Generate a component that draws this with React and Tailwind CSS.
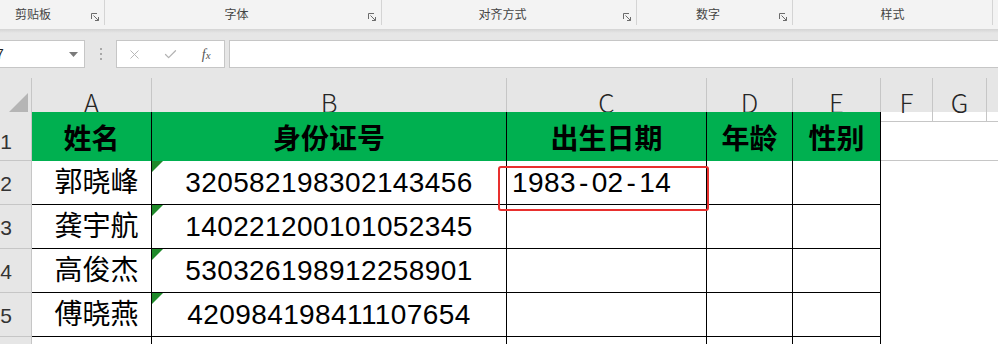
import React from 'react';
import { X, Check } from 'lucide-react';

const cols = 'grid grid-cols-[32px_120px_355px_200px_86px_88px_52px_54px_1fr]';

const groups = [
  { label: '剪贴板', w: 'w-[105px]', labelW: 'w-[66px]', launcher: true },
  { label: '字体', w: 'w-[277px]', launcher: true },
  { label: '对齐方式', w: 'w-[255px]', launcher: true },
  { label: '数字', w: 'w-[156px]', launcher: true },
  { label: '样式', w: 'w-[200px]', launcher: false },
];

const people = [
  { n: 2, name: '郭晓峰', id: '320582198302143456', date: ['1983', '02', '14'] },
  { n: 3, name: '龚宇航', id: '140221200101052345' },
  { n: 4, name: '高俊杰', id: '530326198912258901' },
  { n: 5, name: '傅晓燕', id: '420984198411107654' },
];

const Launcher = () => (
  <svg width="9" height="9" viewBox="0 0 9 9" className="mb-[3px] mr-[4px] shrink-0">
    <path d="M0.5 6V0.5H6" stroke="#6b6b6b" fill="none" />
    <path d="M2.5 2.5L7.5 7.5M4 7.5H7.5V4" stroke="#6b6b6b" fill="none" />
  </svg>
);

const RowHead = ({ n, tall }) => (
  <div className="bg-[#e6e6e6] border-r border-b border-[#c6c6c6] overflow-hidden flex items-end">
    <div
      className={`w-[46px] -ml-[17px] shrink-0 text-center leading-none font-light text-[21px] text-[#333] ${tall ? 'pb-[8px]' : 'pb-[10px]'}`}
    >
      {n}
    </div>
  </div>
);

export default function App() {
  return (
    <div className="w-[998px] h-[344px] overflow-hidden bg-white font-['Liberation_Sans','Noto_Sans_CJK_SC',sans-serif] text-black">
      {/* Ribbon group labels */}
      <div className="h-[29px] bg-[#f3f3f3] flex items-start">
        {groups.map((g) => (
          <div key={g.label} className={`${g.w} h-[25px] border-r border-[#d4d4d4] flex items-end shrink-0`}>
            <div
              className={`${g.labelW || 'flex-1'} text-center text-[12px] leading-[14px] pb-[4px] text-[#444] font-['Noto_Sans_CJK_SC',sans-serif]`}
            >
              {g.label}
            </div>
            {g.labelW && <div className="flex-1" />}
            {g.launcher && <Launcher />}
          </div>
        ))}
      </div>

      {/* Formula bar */}
      <div className="h-[49px] bg-[#e6e6e6]">
        <div className="h-[4px] bg-gradient-to-b from-[#d4d4d4] to-[#e6e6e6]" />
        <div className="flex h-[28px] mt-[7px]">
          <div className="w-[85px] bg-white border-y border-r border-[#c6c6c6] flex items-center justify-between">
            <span className="-ml-[4px] text-[14px] text-[#222] font-['Liberation_Sans',sans-serif]">7</span>
            <svg width="9" height="5" viewBox="0 0 9 5" className="mr-[6px]">
              <path d="M0 0H9L4.5 5Z" fill="#7a7a7a" />
            </svg>
          </div>
          <div className="w-[31px] flex flex-col items-center justify-center gap-[3px]">
            <div className="w-[2px] h-[2px] bg-[#a8a8a8]" />
            <div className="w-[2px] h-[2px] bg-[#a8a8a8]" />
            <div className="w-[2px] h-[2px] bg-[#a8a8a8]" />
          </div>
          <div className="w-[109px] bg-white border border-[#c6c6c6] flex items-center">
            <span className="w-[36px] flex justify-center">
              <X size={15} strokeWidth={1.5} color="#b3b3b3" />
            </span>
            <span className="w-[36px] flex justify-center">
              <Check size={15} strokeWidth={2} color="#b3b3b3" />
            </span>
            <span className="w-[36px] text-center italic text-[14px] text-[#555] font-['Liberation_Serif',serif]">
              f<span className="text-[11px]">x</span>
            </span>
          </div>
          <div className="flex-1 ml-[4px] bg-white border-y border-l border-[#c6c6c6]" />
        </div>
      </div>

      {/* Column headers */}
      <div className={`${cols} h-[34px] bg-[#e6e6e6]`}>
        <div className="border-r border-b border-[#c6c6c6] flex items-end justify-end pr-[3px] pb-[3px]">
          <svg width="25" height="25" viewBox="0 0 25 25">
            <path d="M25 0V25H0Z" fill="#b5b5b5" />
          </svg>
        </div>
        {['A', 'B', 'C', 'D', 'E', 'F', 'G'].map((l) => (
          <div
            key={l}
            className="border-r border-b border-[#c6c6c6] flex items-center justify-center pt-[4px] text-[26px] font-light text-[#262626] font-['Noto_Sans_CJK_SC',sans-serif]"
          >
            {l}
          </div>
        ))}
        <div className="border-b border-[#c6c6c6]" />
      </div>

      {/* Row 1: table header */}
      <div className={`${cols} h-[49px]`}>
        <RowHead n={1} tall />
        {['姓名', '身份证号', '出生日期', '年龄', '性别'].map((t) => (
          <div
            key={t}
            className="bg-[#00b050] border-r border-black flex items-center justify-center text-[28px] font-bold font-['Noto_Sans_CJK_SC',sans-serif]"
          >
            {t}
          </div>
        ))}
        <div className="border-b border-[#c6c6c6]" />
        <div className="border-b border-[#c6c6c6]" />
        <div className="border-b border-[#c6c6c6]" />
      </div>

      {/* Data rows */}
      {people.map((p) => (
        <div key={p.n} className={`${cols} h-[44px]`}>
          <RowHead n={p.n} />
          <div className="border-r border-b border-black flex items-center justify-center pl-[10px] text-[28px]">
            {p.name}
          </div>
          <div className="relative border-r border-b border-black flex items-center justify-center text-[28px] tracking-[0.4px]">
            <svg width="11" height="11" viewBox="0 0 11 11" className="absolute left-0 top-0">
              <path d="M0 0H11L0 11Z" fill="#1f8a2a" />
            </svg>
            {p.id}
          </div>
          <div className="relative border-r border-b border-black flex items-center pl-[5px] text-[28px] tracking-[0.4px]">
            {p.date && (
              <>
                {p.date[0]}
                <span className="px-[3px]">-</span>
                {p.date[1]}
                <span className="px-[3px]">-</span>
                {p.date[2]}
                <div className="absolute -left-[9px] top-[5px] w-[211px] h-[45px] border-2 border-[#e8302e] rounded-[3px] z-10" />
              </>
            )}
          </div>
          <div className="border-r border-b border-black" />
          <div className="border-r border-b border-black" />
          <div />
          <div />
          <div />
        </div>
      ))}

      {/* Row 6 (only its top edge is visible) */}
      <div className={`${cols} h-[20px]`}>
        <div className="bg-[#e6e6e6] border-r border-[#c6c6c6]" />
        <div className="border-r border-black" />
        <div className="border-r border-black" />
        <div className="border-r border-black" />
        <div className="border-r border-black" />
        <div className="border-r border-black" />
      </div>
    </div>
  );
}
